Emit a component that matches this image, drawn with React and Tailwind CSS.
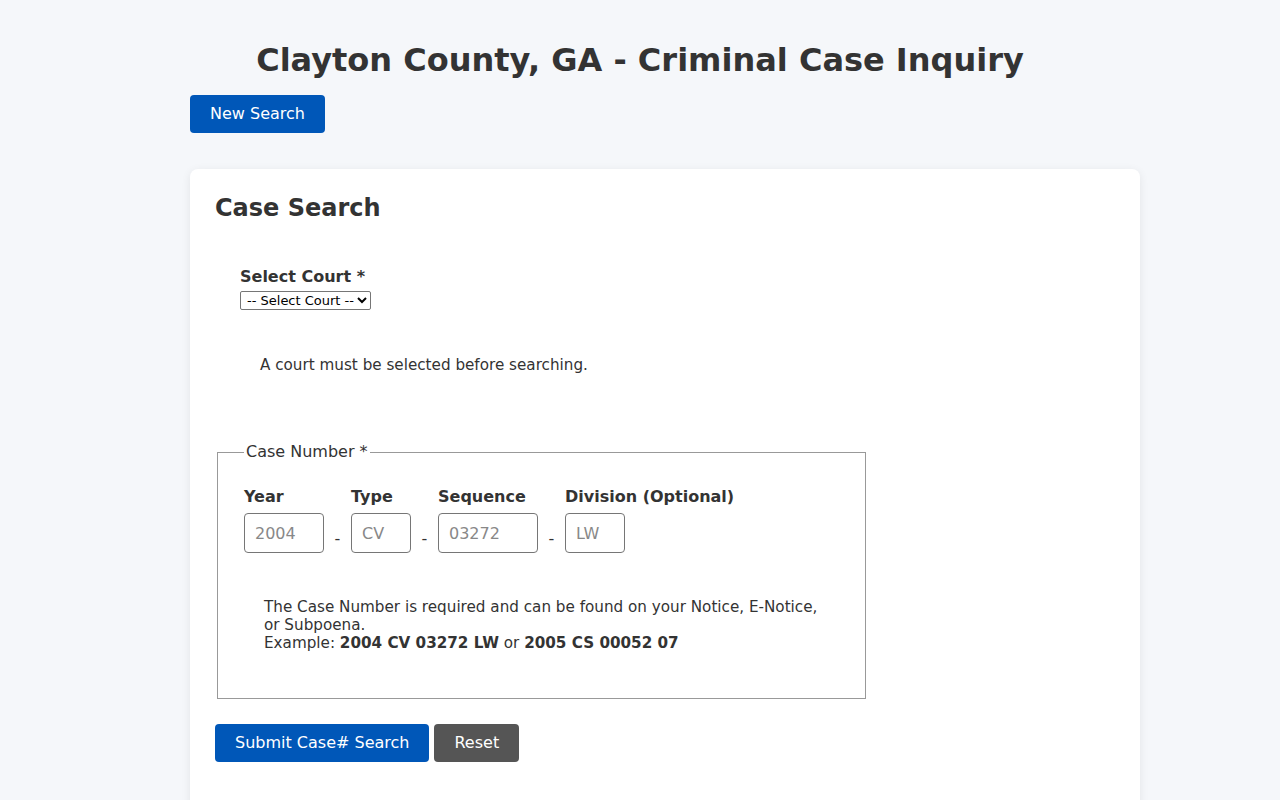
import React from "react";

export default function App() {
  return (
    <div className="min-h-screen bg-[#f5f7fa] text-[#333333]" style={{ fontFamily: '"DejaVu Sans", sans-serif' }}>
      <div className="mx-auto w-[1000px] pt-[38px]">
        <h1 className="text-center text-[32px] font-bold leading-[44px]">Clayton County, GA - Criminal Case Inquiry</h1>
        <div className="ml-[50px]">
          <div className="mt-[13px]">
            <button className="h-[38px] rounded-[4px] bg-[#0057b8] px-[20px] text-[16px] leading-[18px] text-white">New Search</button>
          </div>
          <div className="mt-[36px] rounded-[8px] bg-white p-[25px] shadow-[0_2px_10px_rgba(0,0,0,0.08)]">
            <h2 className="text-[24px] font-bold leading-[28px]">Case Search</h2>
            <div className="mt-[45px] px-[25px]">
              <label className="block text-[16px] font-bold leading-[20px]">Select Court *</label>
              <select className="mt-[4px] block h-[19px] rounded-[2px] border border-[#767676] bg-white pl-[2px] text-[13px] leading-[15px] text-black">
                <option>-- Select Court --</option>
              </select>
              <p className="mt-[45px] pl-[20px] text-[15.2px] leading-[20px]">A court must be selected before searching.</p>
            </div>
            <fieldset className="mx-[2px] mt-[68px] h-[256px] w-[649px] border border-[#999999] px-[26px] pb-[20px] pt-[2px]">
              <legend className="px-[2px] text-[16px] leading-[18px]">Case Number *</legend>
              <div className="mt-[24px] flex items-end">
                <div className="flex flex-col">
                  <span className="text-[16px] font-bold leading-[20px]">Year</span>
                  <input placeholder="2004" className="mt-[6px] h-[40px] w-[80px] rounded-[4px] border border-[#767676] px-[10px] text-[16px] placeholder:text-[#888888]" />
                </div>
                <span className="w-[27px] pb-[2px] text-center text-[16px]">-</span>
                <div className="flex flex-col">
                  <span className="text-[16px] font-bold leading-[20px]">Type</span>
                  <input placeholder="CV" className="mt-[6px] h-[40px] w-[60px] rounded-[4px] border border-[#767676] px-[10px] text-[16px] placeholder:text-[#888888]" />
                </div>
                <span className="w-[27px] pb-[2px] text-center text-[16px]">-</span>
                <div className="flex flex-col">
                  <span className="text-[16px] font-bold leading-[20px]">Sequence</span>
                  <input placeholder="03272" className="mt-[6px] h-[40px] w-[100px] rounded-[4px] border border-[#767676] px-[10px] text-[16px] placeholder:text-[#888888]" />
                </div>
                <span className="w-[27px] pb-[2px] text-center text-[16px]">-</span>
                <div className="flex flex-col">
                  <span className="whitespace-nowrap text-[16px] font-bold leading-[20px]">Division (Optional)</span>
                  <input placeholder="LW" className="mt-[6px] h-[40px] w-[60px] rounded-[4px] border border-[#767676] px-[10px] text-[16px] placeholder:text-[#888888]" />
                </div>
              </div>
              <p className="mt-[45px] w-[580px] pl-[20px] text-[15.2px] leading-[18px]">
                The Case Number is required and can be found on your Notice, E-Notice, or Subpoena.
                <br />
                Example: <strong>2004 CV 03272 LW</strong> or <strong>2005 CS 00052 07</strong>
              </p>
            </fieldset>
            <div className="mt-[25px] flex gap-[5px]">
              <button className="h-[38px] rounded-[4px] bg-[#0057b8] px-[20px] text-[16px] leading-[18px] text-white">Submit Case# Search</button>
              <button className="h-[38px] rounded-[4px] bg-[#555555] px-[20px] text-[16px] leading-[18px] text-white">Reset</button>
            </div>
            <div className="h-[40px]" />
          </div>
        </div>
      </div>
    </div>
  );
}
